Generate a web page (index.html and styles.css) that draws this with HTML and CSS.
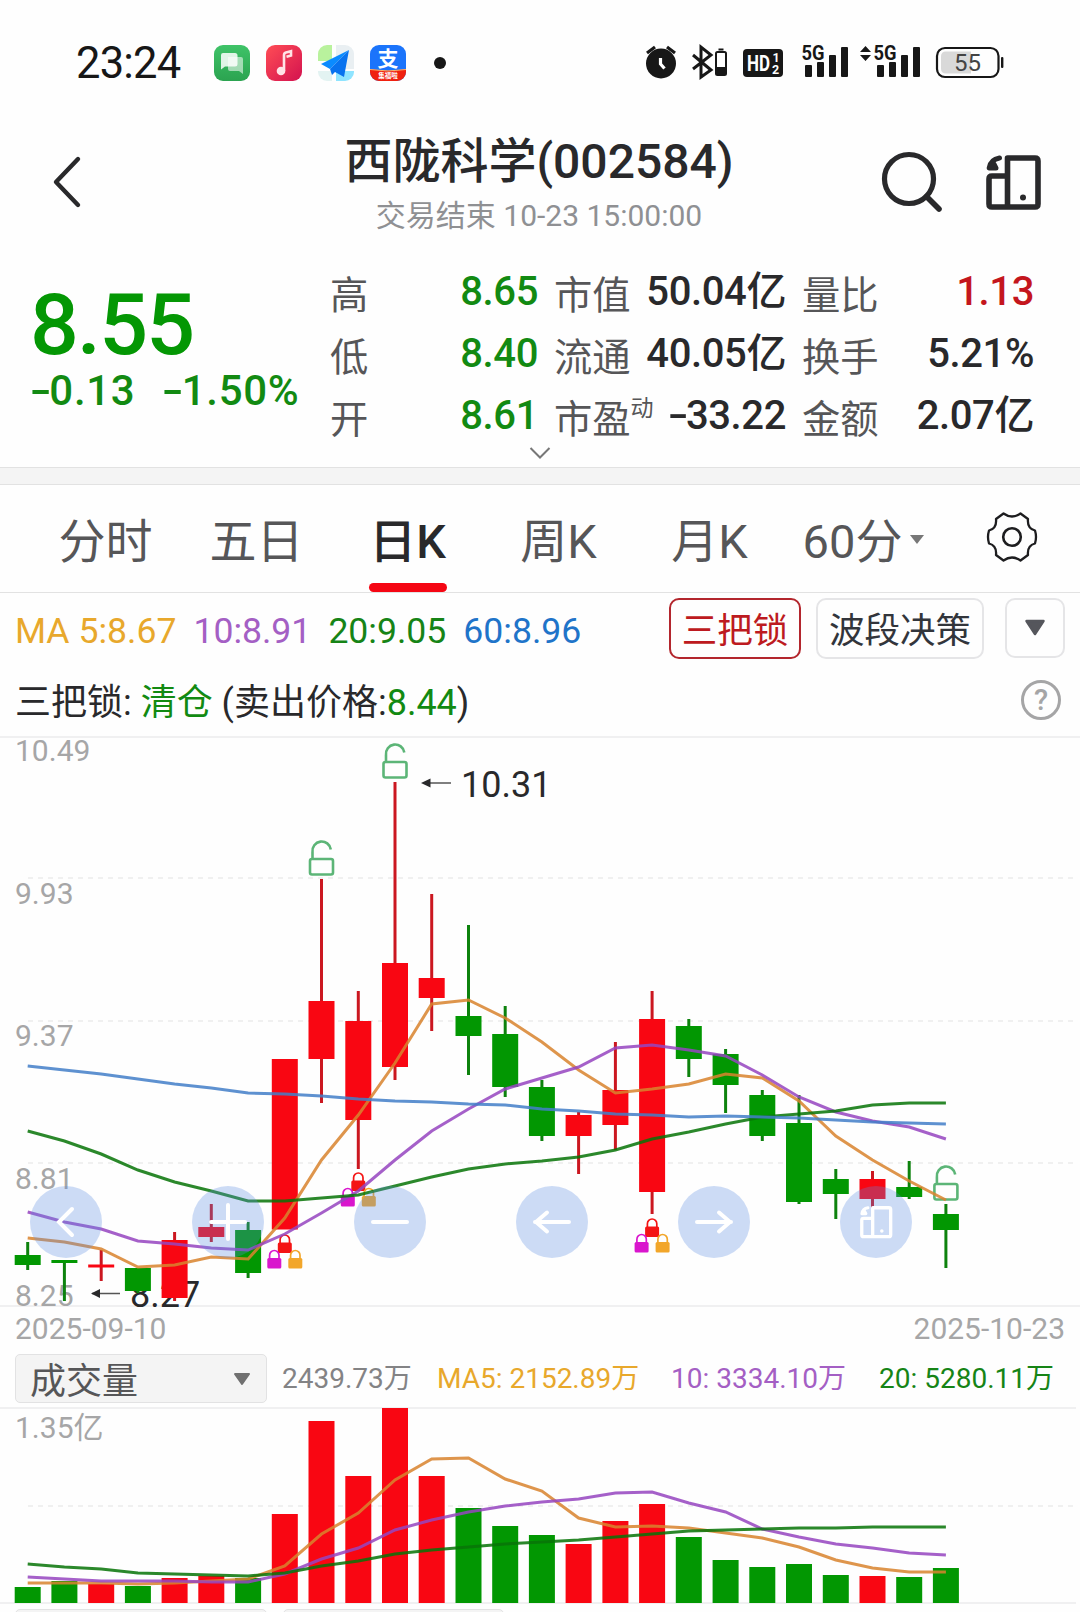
FILE: index.html
```html
<!DOCTYPE html>
<html lang="zh-CN">
<head>
    <meta charset="UTF-8">
    <meta name="viewport" content="width=device-width, initial-scale=1.0">
    <title>西陇科学(002584)</title>
    <link rel="stylesheet" href="styles.css">
</head>
<body>
    <div class="status-bar">
        <span class="clock">23:24</span>
        <div class="apps">
            <svg class="app" viewBox="0 0 36 36">
                <defs><linearGradient id="gChat" x1="0" y1="0" x2="0" y2="1"><stop offset="0" stop-color="#3fc368"/><stop offset="1" stop-color="#2ba350"/></linearGradient></defs>
                <rect width="36" height="36" rx="9" fill="url(#gChat)"/>
                <path d="M14 12h13q2 0 2 2v15l-4-3H16q-2 0-2-2z" fill="#fff" opacity=".55"/>
                <path d="M9 8h12q2.500 0 2.500 2.500V19q0 2.500-2.500 2.500H11l-4 3V10q0-2 2-2z" fill="#fff" opacity=".85"/>
            </svg>
            <svg class="app" viewBox="0 0 36 36">
                <defs><linearGradient id="gMusic" x1="0" y1="0" x2="1" y2="1"><stop offset="0" stop-color="#ff4d55"/><stop offset="1" stop-color="#d3124f"/></linearGradient></defs>
                <rect width="36" height="36" rx="9" fill="url(#gMusic)"/>
                <circle cx="15" cy="26" r="4.300" fill="#ffe3e6"/>
                <path d="M18 26V10q0-2 2-2.500l5-1.300v4.300l-4.500 1.200" fill="none" stroke="#ffe3e6" stroke-width="2.600"/>
            </svg>
            <svg class="app" viewBox="0 0 36 36">
                <path d="M9 0h5v16H0V9a9 9 0 0 1 9-9z" fill="#b9f29d"/>
                <path d="M18 0h9a9 9 0 0 1 9 9v15H18z" fill="#e9eff2"/>
                <path d="M0 26h14v10H9a9 9 0 0 1-9-9z" fill="#e3f3f2"/>
                <path d="M18 26h18v1a9 9 0 0 1-9 9h-9z" fill="#8fe4ff"/>
                <path d="M31 5 3 19l9 5z" fill="#0a8bff"/>
                <path d="M31 5 12 24l2 6 3-3 9 5z" fill="#0872ef"/>
            </svg>
            <svg class="app" viewBox="0 0 36 36">
                <rect width="36" height="36" rx="9" fill="#1b74fb"/>
                <path d="M0 24q18 3 36 0v3a9 9 0 0 1-9 9H9a9 9 0 0 1-9-9z" fill="#f0200f"/>
                <path d="M0 24.500q18 3 36 0" fill="none" stroke="#ffb46a"/>
                <text x="18" y="21" class="zhi">支</text>
                <text x="18" y="32.500" class="fu">集福啦</text>
            </svg>
            <span class="more-dot"></span>
        </div>
        <svg class="signals" width="350" height="40" viewBox="0 0 350 40">
            <!-- alarm -->
            <circle cx="16" cy="23.500" r="15" fill="#171717"/>
            <path d="M2 13l8-6M30 13l-8-6" stroke="#171717" stroke-width="3.200"/>
            <path d="M15.500 18v6l4 4.500" fill="none" stroke="#fff" stroke-width="3.200"/>
            <!-- bluetooth -->
            <path d="M48 15l18 15-10 7V7l10 8-18 14" fill="none" stroke="#171717" stroke-width="3"/>
            <path d="M73.500 9.500h5" stroke="#171717" stroke-width="2"/>
            <rect x="71" y="12" width="10" height="23" rx="1.500" fill="none" stroke="#171717" stroke-width="2"/>
            <rect x="71" y="27" width="10" height="8" fill="#171717"/>
            <!-- volte -->
            <rect x="98" y="9" width="40" height="28" rx="4" fill="#171717"/>
            <text x="102" y="30.500" class="hd" textLength="23" lengthAdjust="spacingAndGlyphs">HD</text>
            <text x="127.500" y="21.500" class="hd-n">1</text>
            <text x="127" y="34" class="hd-n">2</text>
            <!-- sim 1 -->
            <text x="156.500" y="20" class="net" textLength="23" lengthAdjust="spacingAndGlyphs">5G</text>
            <g fill="#171717">
                <rect x="160" y="25" width="7" height="12" rx="1"/>
                <rect x="172" y="22" width="7" height="15" rx="1"/>
                <rect x="184" y="15" width="7" height="22" rx="1"/>
                <rect x="196" y="7" width="7" height="30" rx="1"/>
                <!-- sim 2 -->
                <path d="M215 12l5.500-6 5.500 6zM215 15h11l-5.500 6z"/>
                <rect x="232" y="25" width="7" height="12" rx="1"/>
                <rect x="244" y="22" width="7" height="15" rx="1"/>
                <rect x="256" y="15" width="7" height="22" rx="1"/>
                <rect x="268" y="7" width="7" height="30" rx="1"/>
            </g>
            <text x="228.500" y="20" class="net" textLength="23" lengthAdjust="spacingAndGlyphs">5G</text>
            <!-- battery -->
            <path d="M301 11.500h25v22h-25q-5 0-5-5v-12q0-5 5-5z" fill="#d9d9d9"/>
            <rect x="292" y="8" width="61.500" height="29" rx="8" fill="none" stroke="#171717" stroke-width="2.200"/>
            <rect x="356" y="17" width="2.400" height="11" rx="1" fill="#171717"/>
            <text x="322.500" y="31" class="bat">55</text>
        </svg>
    </div>

    <header class="header">
        <svg class="back" width="30" height="56" viewBox="0 0 30 56"><path d="M26 5 4 28l22 23" fill="none" stroke="#29292b" stroke-width="4.400" stroke-linecap="round" stroke-linejoin="round"/></svg>
        <div class="title">
            <h1>西陇科学(002584)</h1>
            <p>交易结束 10-23 15:00:00</p>
        </div>
        <svg class="search" width="62" height="64" viewBox="0 0 62 64"><circle cx="28" cy="30" r="24.500" fill="none" stroke="#29292b" stroke-width="5.200"/><path d="M45.500 47.500 58 60" stroke="#29292b" stroke-width="5.600" stroke-linecap="round"/></svg>
        <svg class="rotate" width="55" height="55" viewBox="0 0 55 55">
            <g id="rotate-icon" fill="none" stroke="currentColor" stroke-width="5.600" stroke-linejoin="round">
                <path d="M21.500 3h27.500q3 0 3 3v43q0 3-3 3H21.500zM21.500 21H6q-3 0-3 3v25q0 3 3 3h15.500"/>
                <path d="M13.500 3Q4.500 4.500 3.200 13H10L8 9" stroke-width="5" stroke-linecap="round"/>
                <circle cx="37" cy="42.500" r="3" fill="currentColor" stroke="none"/>
            </g>
        </svg>
    </header>

    <section class="quote">
        <div class="price">
            <strong>8.55</strong>
            <div class="change"><span><i class="minus">-</i>0.13</span><span><i class="minus">-</i>1.50%</span></div>
        </div>
        <div class="stats">
            <div><label>高</label><b class="down">8.65</b></div>
            <div><label>市值</label><b>50.04亿</b></div>
            <div><label>量比</label><b class="up">1.13</b></div>
            <div><label>低</label><b class="down">8.40</b></div>
            <div><label>流通</label><b>40.05亿</b></div>
            <div><label>换手</label><b>5.21%</b></div>
            <div><label>开</label><b class="down">8.61</b></div>
            <div><label>市盈<sup>动</sup></label><b><i class="minus">-</i>33.22</b></div>
            <div><label>金额</label><b>2.07亿</b></div>
        </div>
        <svg class="expand" width="24" height="14" viewBox="0 0 24 14"><path d="M2.500 2 12 11.500 21.500 2" fill="none" stroke="#777" stroke-width="2"/></svg>
    </section>

    <nav class="tabs">
        <a>分时</a>
        <a>五日</a>
        <a class="active">日K</a>
        <a>周K</a>
        <a>月K</a>
        <a class="period">60分<i></i></a>
        <svg class="gear" width="52" height="52" viewBox="-26 -26 52 52">
            <path d="M-16-18 -8.500-23.500Q0-17.500 8.500-23.500L16-18Q15-8.500 23-6.500 25 0 23 6.500 15 8.500 16 18L8.500 23.500Q0 17.500-8.500 23.500L-16 18Q-15 8.500-23 6.500-25 0-23-6.500-15-8.500-16-18z" fill="none" stroke="#1d1d1f" stroke-width="2.300" stroke-linejoin="round"/>
            <circle r="8.800" fill="none" stroke="#1d1d1f" stroke-width="2.600"/>
        </svg>
    </nav>

    <div class="ma-row">
        <span class="ma5">MA 5:8.67</span>
        <span class="ma10">10:8.91</span>
        <span class="ma20">20:9.05</span>
        <span class="ma60">60:8.96</span>
        <div class="buttons">
            <button class="selected">三把锁</button>
            <button>波段决策</button>
            <button class="drop"><svg width="22" height="18" viewBox="0 0 22 18"><path d="M2.500 2h17L11 15z" fill="#55565c" stroke="#55565c" stroke-width="2.500" stroke-linejoin="round"/></svg></button>
        </div>
    </div>

    <div class="signal">
        <p>三把锁: <em>清仓</em> (卖出价格:<em>8.44</em>)</p>
        <span class="help">?</span>
    </div>

    <div class="kline">
        <svg id="kline" width="1080" height="570" viewBox="0 737 1080 570"></svg>
        <div class="controls">
            <button><svg viewBox="-36 -36 72 72"><path d="M6-13-7 0 6 13"/></svg></button>
            <button><svg viewBox="-36 -36 72 72"><path d="M-17 0h34M0-17v34"/></svg></button>
            <button><svg viewBox="-36 -36 72 72"><path d="M-17 0h34"/></svg></button>
            <button><svg viewBox="-36 -36 72 72"><path d="M17 0h-34M-5-9.500-16 0-5 9.500"/></svg></button>
            <button><svg viewBox="-36 -36 72 72"><path d="M-17 0h34M5-9.500 16 0 5 9.500"/></svg></button>
            <button><svg viewBox="-36 -36 72 72"><use href="#rotate-icon" transform="translate(-16 -16) scale(.59)"/></svg></button>
        </div>
    </div>
    <div class="dates"><span>2025-09-10</span><span>2025-10-23</span></div>

    <div class="volume-row">
        <div class="select"><span>成交量</span><svg width="18" height="14" viewBox="0 0 18 14"><path d="M2 2h14L9 12z" fill="#707070" stroke="#707070" stroke-width="2" stroke-linejoin="round"/></svg></div>
        <span class="total">2439.73万</span>
        <span class="ma5">MA5: 2152.89万</span>
        <span class="ma10">10: 3334.10万</span>
        <span class="ma20">20: 5280.11万</span>
    </div>
    <svg id="volume" class="volume" width="1080" height="197" viewBox="0 1407 1080 197"></svg>
    <div class="next-row"><div></div><div></div></div>

    <script src="chart.js"></script>
</body>
</html>
```
FILE: styles.css
```css
* {
    box-sizing: border-box;
}
body {
    margin: 0;
    width: 1080px;
    height: 1612px;
    overflow: hidden;
    background: #fefefe;
    color: #29292b;
    font-family: Roboto, "Noto Sans CJK SC", sans-serif;
}
svg {
    display: block;
    flex: none;
    overflow: visible;
}
h1, p {
    margin: 0;
}
button {
    padding: 0;
    font-family: inherit;
    background: none;
}

/* status bar */
.status-bar {
    display: flex;
    height: 125px;
    padding: 40px 0 0 76px;
}
.clock {
    width: 138px;
    padding-top: 1px;
    font-size: 43.5px;
    line-height: 45px;
    letter-spacing: -0.8px;
    color: #171717;
}
.apps {
    display: flex;
    gap: 16px;
    padding-top: 5px;
    width: 431px;
}
.app {
    width: 36px;
    height: 36px;
}
.zhi, .fu {
    fill: #fff;
    font-size: 21px;
    font-weight: 700;
    text-anchor: middle;
}
.fu {
    font-size: 6.5px;
}
.more-dot {
    width: 12px;
    height: 12px;
    margin: 12px 0 0 12px;
    border-radius: 50%;
    background: #171717;
}
.hd, .hd-n, .net {
    font-size: 22px;
    font-weight: 700;
    fill: #fff;
}
.hd-n {
    font-size: 12.5px;
}
.net {
    fill: #171717;
    font-size: 21px;
}
.bat {
    font-size: 24px;
    fill: #444;
    text-anchor: middle;
}

/* header */
.header {
    display: flex;
    height: 125px;
}
.back {
    margin: 29px 0 0 52px;
}
.title {
    flex: 1;
    padding: 7px 0 0 154px;
    text-align: center;
}
.title h1 {
    font-size: 48px;
    font-weight: 500;
    line-height: 60px;
    white-space: nowrap;
}
.title p {
    font-size: 30px;
    line-height: 48px;
    color: #8f9093;
}
.search {
    margin: 24px 0 0 39px;
}
.rotate {
    margin: 30px 39px 0 43px;
}

/* quote */
.quote {
    display: flex;
    position: relative;
    height: 218px;
    padding-top: 11px;
}
.minus {
    display: inline-block;
    width: 0.46em;
    transform: scaleX(1.5);
    transform-origin: left;
    font-style: normal;
}
.price {
    width: 330px;
    padding: 19px 0 0 30px;
    color: #049704;
}
.price strong {
    display: block;
    font-size: 86px;
    font-weight: 500;
    line-height: 90px;
    letter-spacing: -1.8px;
}
.change {
    display: flex;
    gap: 27px;
    padding-top: 1px;
    color: #128a12;
    font-size: 42px;
    font-weight: 500;
    line-height: 40px;
    white-space: nowrap;
    letter-spacing: 0.7px;
}
.stats {
    display: grid;
    grid-template-columns: 208px 232px 232px;
    grid-auto-rows: 62px;
    column-gap: 16px;
}
.stats div {
    display: flex;
    justify-content: space-between;
    line-height: 62px;
    white-space: nowrap;
}
.stats label {
    padding-top: 4px;
    font-size: 38.3px;
    color: #565658;
}
.stats sup {
    font-size: 23px;
    line-height: 0;
    vertical-align: 17px;
}
.stats b {
    font-size: 40px;
    font-weight: 500;
    letter-spacing: -0.4px;
}
.stats .down {
    color: #128a12;
}
.stats .up {
    color: #c4161d;
}
.expand {
    position: absolute;
    left: 528px;
    bottom: 8px;
}

/* tabs */
.tabs {
    display: flex;
    height: 125px;
    padding: 0 0 0 30px;
    border-top: 16px solid #f4f4f4;
    border-bottom: 1px solid #e2e2e2;
    box-shadow: inset 0 1px #e2e2e2, 0 -1px #e2e2e2;
    font-size: 47px;
    line-height: 115px;
    color: #565658;
}
.tabs a {
    position: relative;
    width: 151px;
    text-align: center;
}
.tabs .active {
    color: #29292b;
    font-weight: 500;
}
.tabs .active::after {
    content: "";
    position: absolute;
    left: 37px;
    bottom: 0;
    width: 78px;
    height: 9px;
    border-radius: 5px;
    background: #f50613;
}
.tabs .period {
    display: flex;
    justify-content: center;
    gap: 8px;
    width: 157px;
}
.period i {
    margin-top: 51px;
    height: 9px;
    border: 7.5px solid transparent;
    border-top: 9px solid #777;
    border-bottom: 0;
}
.gear {
    margin: 27px 0 0 44px;
}

/* moving averages */
.ma-row {
    display: flex;
    height: 76px;
    padding: 0 15px 0 15px;
    font-size: 35.6px;
    line-height: 76px;
    white-space: nowrap;
}
.ma-row span {
    margin-right: 17px;
}
.ma5 {
    color: #e8a82c;
}
.ma10 {
    color: #a45fc4;
}
.ma20 {
    color: #168416;
}
.ma60 {
    color: #1f74c9;
}
.buttons {
    display: flex;
    gap: 15px;
    margin: 5px 0 0 auto;
}
.buttons button {
    width: 168px;
    height: 61px;
    padding-top: 5px;
    border: 2px solid #e5e5e7;
    border-radius: 10px;
    font-size: 35.5px;
    line-height: 52px;
    color: #32353b;
}
.buttons .selected {
    width: 132px;
    border-color: #b3262d;
    color: #bd1a20;
}
.buttons .drop {
    display: flex;
    align-items: center;
    justify-content: center;
    width: 60px;
    height: 60px;
    margin-left: 6px;
    padding: 0;
}
.signal {
    display: flex;
    justify-content: space-between;
    height: 68px;
    padding: 0 19px 0 15px;
    font-size: 36px;
    line-height: 68px;
}
.signal em {
    font-style: normal;
    color: #128a12;
}
.help {
    width: 40px;
    height: 40px;
    margin-top: 11px;
    border: 3.6px solid #a5a5a6;
    border-radius: 50%;
    color: #a5a5a6;
    font-size: 29px;
    font-weight: 500;
    line-height: 35px;
    text-align: center;
}

/* charts */
.kline {
    position: relative;
}
.controls {
    display: flex;
    gap: 90px;
    position: absolute;
    left: 30px;
    top: 449px;
}
.controls button {
    width: 72px;
    height: 72px;
    border: 0;
    border-radius: 50%;
    background: rgba(90, 140, 225, 0.3);
    color: #fff;
}
.controls path {
    fill: none;
    stroke: #fff;
    stroke-width: 4;
    stroke-linecap: round;
}
.axis {
    font-size: 30px;
    fill: #a6a6a7;
}
.mark {
    font-size: 36px;
    fill: #29292b;
}
.dates {
    display: flex;
    justify-content: space-between;
    height: 47px;
    padding: 0 15px;
    font-size: 30px;
    line-height: 44px;
    color: #a6a6a7;
}
.volume-row {
    display: flex;
    height: 53px;
    padding-left: 15px;
    font-size: 28px;
    line-height: 49px;
    white-space: nowrap;
}
.select {
    display: flex;
    align-items: center;
    justify-content: space-between;
    width: 252px;
    height: 49px;
    padding: 0 15px 0 14px;
    border: 1px solid #e2e2e3;
    border-radius: 5px;
    background: #f4f4f4;
    font-size: 36px;
    color: #565658;
}
.select span {
    padding-top: 8px;
}
.total {
    width: 155px;
    margin-left: 15px;
    color: #838385;
}
.volume-row .ma5 {
    width: 234px;
}
.volume-row .ma10 {
    width: 208px;
}
.next-row {
    display: flex;
    gap: 16px;
    padding: 5px 0 0 15px;
}
.next-row div {
    width: 252px;
    height: 49px;
    border: 1px solid #e2e2e3;
    border-radius: 5px;
    background: #f4f4f4;
}
.next-row div + div {
    width: 221px;
}
```
FILE: chart.js
```js
const RED = '#f90612';
const GREEN = '#029702';
const x = i => +(27.7 + i * 36.73).toFixed(1);

// [up, wick top, body top, body bottom, wick bottom]
const candles = [
    [0, 1242, 1255, 1265, 1270], [0, 1261, 1260, 1263, 1301], [1, 1250, 1264.5, 1267.5, 1281],
    [0, 1268, 1268, 1291, 1293], [1, 1232, 1240, 1298, 1301], [1, 1204, 1227, 1237, 1242],
    [0, 1222, 1230, 1273, 1278], [1, 1060, 1059, 1229.5, 1229], [1, 879, 1001, 1059, 1103],
    [1, 991, 1021, 1120, 1169], [1, 782, 963, 1067, 1080], [1, 894, 978, 998, 1031],
    [0, 925, 1016, 1036, 1075], [0, 1006, 1034, 1087, 1097], [0, 1080, 1087, 1136, 1141],
    [1, 1112, 1115, 1136, 1174], [1, 1042, 1090, 1125, 1150], [1, 991, 1019, 1192, 1214],
    [0, 1019, 1026, 1059, 1077], [0, 1049, 1054, 1085, 1113], [0, 1090, 1095, 1136, 1141],
    [0, 1095, 1123, 1202, 1204], [0, 1169, 1179, 1194, 1219], [1, 1171, 1179, 1199, 1208],
    [0, 1161, 1187, 1197, 1199], [0, 1204, 1214, 1230, 1268]
];

const priceLines = {
    '#d9842e': [1238, 1242, 1249, 1267, 1265, 1257, 1259, 1218, 1160, 1115, 1063, 1004, 1000, 1018, 1042, 1070, 1093, 1089, 1084, 1074, 1078, 1101, 1136, 1160, 1181, 1200],
    '#9646c0': [1212, 1222, 1229, 1241, 1244, 1248, 1250, 1234, 1213, 1191, 1160, 1131, 1109, 1089, 1078, 1067, 1048, 1045, 1050, 1056, 1075, 1097, 1112, 1121, 1127, 1139],
    '#087508': [1131, 1141, 1154, 1170, 1182, 1191, 1201, 1201, 1198, 1195, 1186, 1177, 1169, 1164, 1161, 1157, 1150, 1139, 1132, 1124, 1117, 1114, 1111, 1105, 1103, 1103],
    '#437fc8': [1066, 1070, 1074, 1079, 1084, 1088, 1093, 1094, 1096, 1099, 1101, 1102, 1104, 1105, 1109, 1111, 1114, 1115, 1117, 1116, 1117, 1118, 1120, 1122, 1123, 1124]
};

const bars = [1587, 1581, 1584, 1586, 1578, 1576, 1578, 1514, 1421, 1476, 1408, 1476, 1508, 1526, 1535, 1544, 1521, 1504, 1537, 1560, 1567, 1564, 1575, 1576, 1577, 1568];
const volumeLines = {
    '#d9842e': [1583, 1583, 1583, 1584, 1583, 1581, 1579, 1566, 1534, 1513, 1480, 1459, 1458, 1479, 1491, 1518, 1527, 1526, 1528, 1533, 1538, 1547, 1560, 1568, 1572, 1572],
    '#9646c0': [1577, 1579, 1581, 1581, 1581, 1582, 1582, 1574, 1559, 1548, 1530, 1520, 1512, 1506, 1502, 1499, 1493, 1492, 1503, 1512, 1529, 1537, 1544, 1548, 1553, 1555],
    '#087508': [1564, 1567, 1569, 1573, 1574, 1575, 1576, 1573, 1566, 1561, 1554, 1550, 1547, 1544, 1542, 1540, 1537, 1534, 1531, 1530, 1529, 1528, 1528, 1527, 1527, 1527]
};

function solid(y, end = 1080) {
    return `<path d="M0 ${y}H${end}" stroke="#f0f0f1" stroke-width="2"/>`;
}
function dashed(y) {
    return `<path d="M28 ${y}H1074" stroke="#f0f0f0" stroke-width="2" stroke-dasharray="5 5"/>`;
}
function label(y, text) {
    return `<text class="axis" x="15" y="${y}">${text}</text>`;
}
function lines(set) {
    return Object.entries(set).map(([color, ys]) =>
        `<polyline points="${ys.map((y, i) => x(i) + ',' + y).join(' ')}" fill="none" stroke="${color}" stroke-width="3" stroke-opacity=".86"/>`
    ).join('');
}
function candle([up, high, top, bottom, low], i) {
    return `<path d="M${x(i)} ${high}V${low}" stroke="${up ? '#cb1720' : '#0d820d'}" stroke-width="3"/>` +
        `<rect x="${x(i) - 13}" y="${top}" width="26" height="${bottom - top}" fill="${up ? RED : GREEN}"/>`;
}
// open padlock above a candle (sell)
function openLock(i, y) {
    return `<g transform="translate(${x(i) - 12.5} ${y})" fill="none" stroke="#5cb577" stroke-width="2.6">
        <rect x="1" y="18" width="23" height="15.500" rx="2"/><path d="M3.500 18v-7a9 9 0 0 1 18.300-2.500"/></g>`;
}
// group of three closed padlocks below a candle (buy)
function locks(i, y, last = '#f2a62a') {
    const lock = (dx, dy, color) => `<g transform="translate(${x(i) + dx} ${y + dy})">
        <path d="M-4.700 10V5.700a4.700 4.700 0 0 1 9.400 0V10" fill="none" stroke="${color}" stroke-width="1.700"/>
        <rect x="-7" y="8.500" width="14" height="10.500" rx="1.500" fill="${color}"/></g>`;
    return lock(0, 0, '#f41414') + lock(-10.5, 15.5, '#d916cd') + lock(10.5, 15.5, last);
}

document.getElementById('kline').innerHTML =
    solid(737) + solid(1306) + [878, 1021, 1163].map(dashed).join('') +
    label(761, '10.49') + label(904, '9.93') + label(1046, '9.37') + label(1189, '8.81') + label(1306, '8.25') +
    `<text class="mark" x="130" y="1307">8.27</text><text class="mark" x="461" y="797">10.31</text>
    <path d="M92 1293.500H120M424 783H451" stroke="#555" stroke-width="1.300"/>
    <path d="M91 1293.500l9-4.500v9zM421 783l9.500-4.500v9z" fill="#29292b"/>` +
    candles.map(candle).join('') +
    openLock(8, 841) + openLock(10, 744) + openLock(25, 1166) +
    locks(7, 1234) + locks(9, 1172, '#f2a62a') + locks(17, 1218) +
    lines(priceLines);

document.getElementById('volume').innerHTML =
    solid(1408, 1076) + solid(1603, 1076) + dashed(1506) + label(1438, '1.35亿') +
    bars.map((y, i) => `<rect x="${x(i) - 13}" y="${y}" width="26" height="${1603 - y}" fill="${candles[i][0] ? RED : GREEN}"/>`).join('') +
    lines(volumeLines);
```
